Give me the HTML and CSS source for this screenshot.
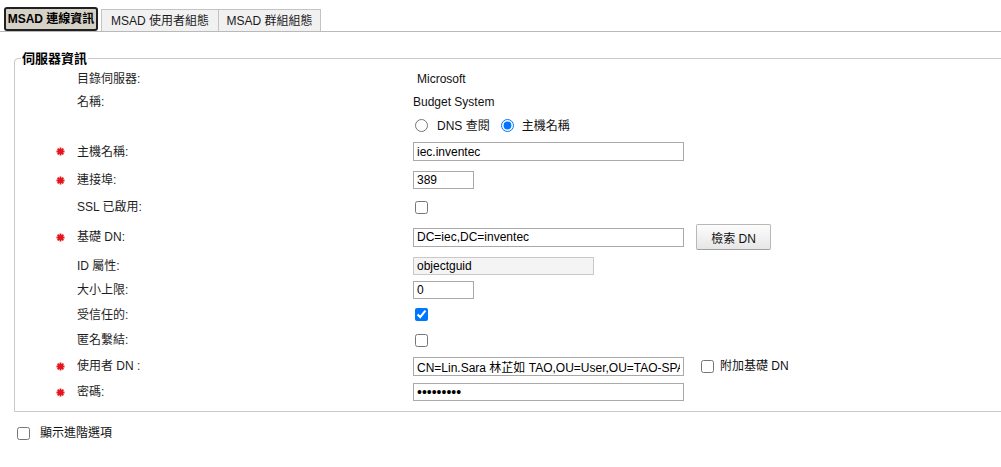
FILE: index.html
```html
<!DOCTYPE html>
<html lang="zh-Hant">
<head>
<meta charset="utf-8">
<title>MSAD 連線資訊</title>
<link rel="stylesheet" href="styles.css">
</head>
<body>
<div class="page">
  <div class="tabs">
    <div class="tab active">MSAD 連線資訊</div>
    <div class="tab t2">MSAD 使用者組態</div>
    <div class="tab t3">MSAD 群組組態</div>
  </div>

  <fieldset class="server">
    <legend>伺服器資訊</legend>
    <div class="form">
      <span class="req"></span><span class="lbl">目錄伺服器:</span><span class="val text inset">Microsoft</span>
      <span class="req"></span><span class="lbl">名稱:</span><span class="val text">Budget System</span>
      <span class="req"></span><span class="lbl"></span>
      <span class="val radios">
        <input type="radio" name="mode" class="r1"><span class="rt1">DNS 查閱</span>
        <input type="radio" name="mode" class="r2" checked><span class="rt2">主機名稱</span>
      </span>

      <span class="req"><svg class="star" width="9" height="9" viewBox="0 0 9 9"><path d="M4.5 0.5V8.5M0.5 4.5H8.5M1.6 1.6L7.4 7.4M7.4 1.6L1.6 7.4" stroke="#e3141c" stroke-width="1.8"/></svg></span>
      <span class="lbl">主機名稱:</span>
      <span class="val"><input class="inp long" type="text" value="iec.inventec"></span>

      <span class="req"><svg class="star" width="9" height="9" viewBox="0 0 9 9"><path d="M4.5 0.5V8.5M0.5 4.5H8.5M1.6 1.6L7.4 7.4M7.4 1.6L1.6 7.4" stroke="#e3141c" stroke-width="1.8"/></svg></span>
      <span class="lbl">連接埠:</span>
      <span class="val"><input class="inp short" type="text" value="389"></span>

      <span class="req"></span><span class="lbl">SSL 已啟用:</span>
      <span class="val"><input type="checkbox" class="cb"></span>

      <span class="req"><svg class="star" width="9" height="9" viewBox="0 0 9 9"><path d="M4.5 0.5V8.5M0.5 4.5H8.5M1.6 1.6L7.4 7.4M7.4 1.6L1.6 7.4" stroke="#e3141c" stroke-width="1.8"/></svg></span>
      <span class="lbl">基礎 DN:</span>
      <span class="val"><input class="inp long" type="text" value="DC=iec,DC=inventec"><button class="btn" type="button">檢索 DN</button></span>

      <span class="req"></span><span class="lbl">ID 屬性:</span>
      <span class="val"><input class="inp mid ro" type="text" value="objectguid" readonly></span>

      <span class="req"></span><span class="lbl">大小上限:</span>
      <span class="val"><input class="inp short" type="text" value="0"></span>

      <span class="req"></span><span class="lbl">受信任的:</span>
      <span class="val"><input type="checkbox" class="cb" checked></span>

      <span class="req"></span><span class="lbl">匿名繫結:</span>
      <span class="val"><input type="checkbox" class="cb"></span>

      <span class="req"><svg class="star" width="9" height="9" viewBox="0 0 9 9"><path d="M4.5 0.5V8.5M0.5 4.5H8.5M1.6 1.6L7.4 7.4M7.4 1.6L1.6 7.4" stroke="#e3141c" stroke-width="1.8"/></svg></span>
      <span class="lbl">使用者 DN :</span>
      <span class="val"><input class="inp long" type="text" value="CN=Lin.Sara 林芷如 TAO,OU=User,OU=TAO-SPAN,DC=iec,DC=inventec"><input type="checkbox" class="cb append"><span class="apptext">附加基礎 DN</span></span>

      <span class="req"><svg class="star" width="9" height="9" viewBox="0 0 9 9"><path d="M4.5 0.5V8.5M0.5 4.5H8.5M1.6 1.6L7.4 7.4M7.4 1.6L1.6 7.4" stroke="#e3141c" stroke-width="1.8"/></svg></span>
      <span class="lbl">密碼:</span>
      <span class="val"><input class="inp long pwd" type="password" value="123456789"></span>
    </div>
  </fieldset>

  <div class="advanced">
    <input type="checkbox" class="cb">
    <span class="advtext">顯示進階選項</span>
  </div>
</div>
</body>
</html>
```

FILE: styles.css
```css
html, body {
  margin: 0;
  padding: 0;
  background: #ffffff;
  overflow: hidden;
}

body {
  font-family: "Liberation Sans", "Noto Sans CJK TC", sans-serif;
  font-size: 12px;
  line-height: 16px;
  color: #111111;
}

.page {
  width: 1001px;
  overflow: hidden;
}

/* Tabs */
.tabs {
  display: flex;
  align-items: flex-end;
  padding: 7px 0 0 4px;
  border-bottom: 1px solid #b9b9b9;
}

.tab {
  box-sizing: border-box;
  display: flex;
  align-items: center;
  justify-content: center;
  white-space: nowrap;
  color: #1a1a1a;
}

.tab.active {
  width: 94px;
  height: 24px;
  border: 2px solid #202020;
  border-radius: 3px;
  background: #d5d1c6;
  font-weight: bold;
  color: #000000;
}

.tab.t2 {
  width: 118px;
  height: 22px;
  margin-left: 3px;
  border: 1px solid #c3c3c3;
  border-bottom: none;
  background: #f1f1f1;
}

.tab.t3 {
  width: 103px;
  height: 22px;
  margin-left: -1px;
  border: 1px solid #c3c3c3;
  border-bottom: none;
  background: #f1f1f1;
}

/* Fieldset */
.server {
  margin: 17px -20px 0 14px;
  padding: 1px 0 4px 6px;
  border: 1px solid #c9c9c9;
  border-radius: 4px 0 0 0;
  min-width: 0;
}

.server legend {
  padding: 2px 1px 0 1px;
  font-size: 13px;
  font-weight: bold;
  line-height: 16px;
  color: #000000;
}

.form {
  display: grid;
  grid-template-columns: 56px 336px 1fr;
  grid-template-rows: 22px 23px 25px 27px 30px 24px 36px 21px 28px 21px 30px 22px 30px;
}

.req,
.lbl,
.val {
  display: flex;
  align-items: center;
  white-space: nowrap;
}

.req {
  padding-left: 35px;
}

.star {
  display: block;
}

.lbl {
  color: #1e1e1e;
}

.val.inset {
  padding-left: 4px;
}

.radios .r1 {
  margin: 0 0 0 2px;
}

.radios .rt1 {
  margin-left: 9px;
}

.radios .r2 {
  margin: 0 0 0 11px;
}

.radios .rt2 {
  margin-left: 8px;
}

.inp {
  box-sizing: border-box;
  height: 19px;
  margin: 0;
  padding: 0 3px;
  border: 1px solid #a9a9a9;
  border-radius: 0;
  font-family: "Liberation Sans", "Noto Sans CJK TC", sans-serif;
  font-size: 12px;
  color: #000000;
  background: #ffffff;
  outline: none;
}

.inp.long {
  width: 271px;
}

.inp.short {
  width: 61px;
  height: 18px;
}

.inp.mid {
  width: 181px;
  height: 18px;
}

.inp.ro {
  background: #f4f4f4;
  border-color: #c9c9c9;
}

.inp.pwd {
  height: 18px;
  font-size: 14px;
}

.cb {
  width: 13px;
  height: 13px;
  margin: 0 0 0 2px;
}

.btn {
  box-sizing: border-box;
  width: 75px;
  height: 26px;
  margin: 0 0 0 12px;
  padding: 0;
  border: 1px solid #b8b8b8;
  border-bottom-color: #a0a0a0;
  border-radius: 2px;
  background: linear-gradient(#fdfdfd, #e6e6e6);
  font-family: "Liberation Sans", "Noto Sans CJK TC", sans-serif;
  font-size: 12px;
  color: #111111;
}

.cb.append {
  margin-left: 17px;
}

.apptext {
  margin-left: 6px;
}

/* Advanced */
.advanced {
  display: flex;
  align-items: center;
  height: 24px;
  margin-top: 9px;
  padding-left: 15px;
}

.advtext {
  margin-left: 10px;
}
```
